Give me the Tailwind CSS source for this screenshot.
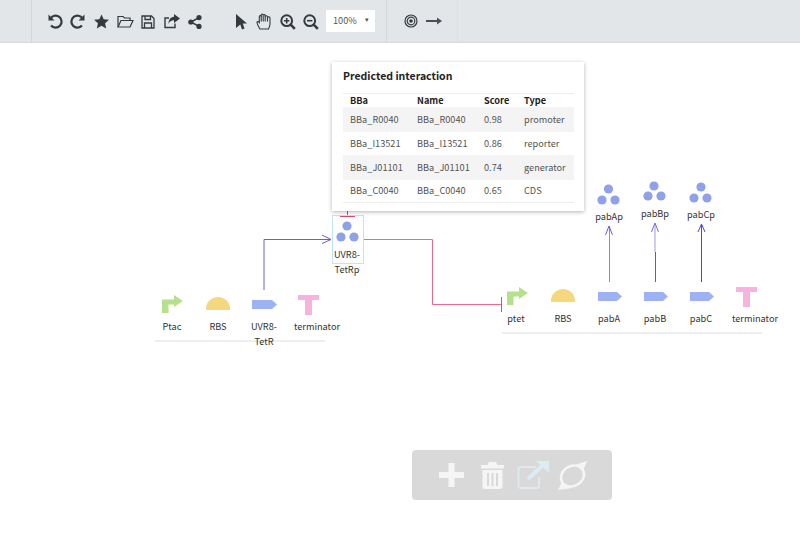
<!DOCTYPE html>
<html>
<head>
<meta charset="utf-8">
<script src="https://cdn.jsdelivr.net/npm/@tailwindcss/browser@4"></script>
</head>
<body class="bg-white overflow-hidden font-['Noto_Sans_CJK_SC','Noto_Sans',sans-serif] text-[#333]">
<div class="w-[800px] h-[552px] relative overflow-hidden">
  <!-- toolbar -->
  <div class="h-[43px] bg-[#e2e6e9] border-b border-[#d5dadd] flex items-center text-[#343a40]">
    <div class="w-[32px] h-full border-r border-[#d3d8db] shrink-0"></div>
    <div class="flex items-center w-[355px] h-full border-r border-[#d3d8db] shrink-0 relative">
      <svg class="absolute left-[15px] top-[13px]" width="16" height="16" viewBox="0 0 16 16" fill="none" stroke="#343a40" stroke-width="2.2"><path d="M3.5 5.5 A6 6 0 1 1 4 12.5"/><path d="M1.5 1.5 L1.5 7.5 L7.5 7.5 Z" fill="#343a40" stroke="none"/></svg>
      <svg class="absolute left-[38px] top-[13px]" width="16" height="16" viewBox="0 0 16 16" fill="none" stroke="#343a40" stroke-width="2.2"><path d="M12.5 5.5 A6 6 0 1 0 12 12.5"/><path d="M14.5 1.5 L14.5 7.5 L8.5 7.5 Z" fill="#343a40" stroke="none"/></svg>
      <svg class="absolute left-[62px] top-[14px]" width="15" height="15" viewBox="0 0 16 15"><path fill="#343a40" d="M8 0 L10.3 5 L16 5.6 L11.8 9.4 L13 15 L8 12.1 L3 15 L4.2 9.4 L0 5.6 L5.7 5 Z"/></svg>
      <svg class="absolute left-[85px] top-[15px]" width="17" height="13" viewBox="0 0 17 13" fill="none" stroke="#343a40" stroke-width="1.2"><path d="M1 11.5 V1.5 H6 L7.5 3 H13 V5"/><path d="M1 12 L4 5.5 H16 L13 12 Z"/></svg>
      <svg class="absolute left-[109px] top-[15px]" width="14" height="14" viewBox="0 0 14 14" fill="none" stroke="#343a40" stroke-width="1.3"><path d="M1 1 H10.5 L13 3.5 V13 H1 Z"/><path d="M4 1 V4.5 H9.5 V1"/><path d="M3.5 13 V8 H10.5 V13"/></svg>
      <svg class="absolute left-[132px] top-[14px]" width="16" height="15" viewBox="0 0 16 15"><path fill="none" stroke="#343a40" stroke-width="1.4" d="M11 9.5 V13.5 H1 V4 H5"/><path fill="#343a40" d="M10 0 L16 4.5 L10 9 V6.3 C7 6.3 5.5 7.5 4.5 10 C4.5 6 6.5 3 10 2.8 Z"/></svg>
      <svg class="absolute left-[156px] top-[15px]" width="14" height="14" viewBox="0 0 14 14"><g fill="#343a40"><circle cx="2.8" cy="7" r="2.6"/><circle cx="11" cy="2.6" r="2.6"/><circle cx="11" cy="11.4" r="2.6"/></g><path d="M3 7 L11 2.6 M3 7 L11 11.4" stroke="#343a40" stroke-width="1.6"/></svg>
      <svg class="absolute left-[204px] top-[14px]" width="11" height="16" viewBox="0 0 11 16"><path fill="#343a40" d="M0 0 L11 9.5 H6.8 L8.5 14.5 L6 15.5 L4.3 10.5 L0 14 Z"/></svg>
      <svg class="absolute left-[224px] top-[13px]" width="16" height="17" viewBox="0 0 16 17" fill="none" stroke="#343a40" stroke-width="1.1"><path d="M4 16 C2.5 13 1 11.5 1 9.5 C1 8.3 2.5 8.3 3.3 9.5 V3.5 C3.3 2.2 5.2 2.2 5.2 3.5 V2 C5.2 .7 7.2 .7 7.2 2 V2.5 C7.2 1.3 9.2 1.3 9.2 2.5 V3.5 C9.2 2.5 11.5 2.5 11.5 3.7 V4.5 C11.5 3.6 14 3.6 14 5 V11 C14 13 13 14.5 12.5 16 Z"/><path d="M5.2 3 V8.5 M7.2 2.5 V8.5 M9.2 3 V8.5 M11.5 4 V8.5"/></svg>
      <svg class="absolute left-[248px] top-[14px]" width="16" height="16" viewBox="0 0 16 16" fill="none" stroke="#343a40"><circle cx="6.7" cy="6.7" r="5.4" stroke-width="2"/><path d="M10.7 10.7 L14.8 14.8" stroke-width="2.6"/><path d="M4 6.7 H9.4 M6.7 4 V9.4" stroke-width="1.6"/></svg>
      <svg class="absolute left-[271px] top-[14px]" width="16" height="16" viewBox="0 0 16 16" fill="none" stroke="#343a40"><circle cx="6.7" cy="6.7" r="5.4" stroke-width="2"/><path d="M10.7 10.7 L14.8 14.8" stroke-width="2.6"/><path d="M4 6.7 H9.4" stroke-width="1.6"/></svg>
      <div class="absolute left-[294px] top-[10px] w-[49px] h-[22px] bg-white flex items-center text-[9.2px] pl-[7px] text-[#555]">100%<span class="absolute right-[6px] top-[5px] text-[7px] leading-[8px]">▾</span></div>
    </div>
    <div class="w-[71px] h-full border-r border-[#dce0e3] shrink-0 relative">
      <svg class="absolute left-[17px] top-[14px]" width="14" height="14" viewBox="0 0 14 14" fill="none" stroke="#343a40"><circle cx="7" cy="7" r="6" stroke-width="1.2"/><circle cx="7" cy="7" r="3.8" stroke-width="1.2"/><circle cx="7" cy="7" r="1.8" fill="#343a40" stroke="none"/></svg>
      <svg class="absolute left-[39px] top-[16px]" width="16" height="10" viewBox="0 0 16 10"><path d="M0 5 H12" stroke="#4a5055" stroke-width="2"/><path d="M11 1.5 L16 5 L11 8.5 Z" fill="#4a5055"/></svg>
    </div>
  </div>

  <!-- connectors -->
  <svg class="absolute left-0 top-0" width="800" height="552" fill="none">
    <path d="M264 290 V239.5 H331" stroke="#6d5be6"/>
    <path d="M322 235 L331 239.5 L322 243.5" stroke="#6d5be6"/>
    <path d="M363 239.5 H432.5 V304.5 H501" stroke="#ec6a86"/>
    <path d="M501.5 297 V312" stroke="#c85a70"/>
    <path d="M347.5 211 V216" stroke="#d84a68"/>
    <path d="M340 216.5 H355" stroke="#d84a68"/>
    <path d="M609.5 282 V226" stroke="#9080ea"/>
    <path d="M605.5 235 L609 226 L612.5 235" stroke="#6d5be6"/>
    <path d="M655.5 282 V252" stroke="#6a4fe0"/>
    <path d="M655 252 V224" stroke="#a698ea"/>
    <path d="M651.5 232 L655 223 L658.5 232" stroke="#7a66dd"/>
    <path d="M701.5 282 V225" stroke="#5a3de0"/>
    <path d="M698 232 L701.5 224 L705 232" stroke="#5a3de0"/>
  </svg>

  <!-- baselines -->
  <div class="absolute left-[155px] top-[340px] w-[170px] h-[2px] bg-[#eceeef]"></div>
  <div class="absolute left-[502px] top-[332px] w-[260px] h-[2px] bg-[#eceeef]"></div>

  <!-- Protein selected box -->
  <div class="absolute left-[332px] top-[215px] w-[32px] h-[49px] border border-[#c5e3f8]"></div>

  <!-- parts left -->
  <svg class="absolute left-[162px] top-[295px]" width="22" height="18" viewBox="0 0 22 18"><path fill="#b5e08c" d="M0 18 V4.5 H12 V0 L21 6 L12 12 V9.5 H6.5 V18 Z"/></svg>
  <div class="absolute left-[206px] top-[297px] w-[24px] h-[13px] bg-[#f5d77e] rounded-t-[12px]"></div>
  <svg class="absolute left-[252px] top-[299px]" width="26" height="11" viewBox="0 0 26 11"><path fill="#9db2f5" d="M0 1 H20 L25 5.5 L20 10 H0 Z"/></svg>
  <svg class="absolute left-[298px] top-[295px]" width="22" height="20" viewBox="0 0 22 20"><path fill="#f6b3de" d="M0 0 H21 V5 H14 V20 H7 V5 H0 Z"/></svg>

  <!-- parts right -->
  <svg class="absolute left-[507px] top-[287px]" width="22" height="18" viewBox="0 0 22 18"><path fill="#b5e08c" d="M0 18 V4.5 H12 V0 L21 6 L12 12 V9.5 H6.5 V18 Z"/></svg>
  <div class="absolute left-[551px] top-[289px] w-[24px] h-[13px] bg-[#f5d77e] rounded-t-[12px]"></div>
  <svg class="absolute left-[598px] top-[291px]" width="25" height="11" viewBox="0 0 25 11"><path fill="#9db2f5" d="M0 1 H19 L24 5.5 L19 10 H0 Z"/></svg>
  <svg class="absolute left-[644px] top-[291px]" width="25" height="11" viewBox="0 0 25 11"><path fill="#9db2f5" d="M0 1 H19 L24 5.5 L19 10 H0 Z"/></svg>
  <svg class="absolute left-[690px] top-[291px]" width="25" height="11" viewBox="0 0 25 11"><path fill="#9db2f5" d="M0 1 H19 L24 5.5 L19 10 H0 Z"/></svg>
  <svg class="absolute left-[736px] top-[287px]" width="22" height="20" viewBox="0 0 22 20"><path fill="#f6b3de" d="M0 0 H21 V5 H14 V20 H7 V5 H0 Z"/></svg>

  <!-- protein glyphs -->
  <svg class="absolute left-[336px] top-[220px]" width="24" height="23" viewBox="0 0 24 23"><g fill="#8fa1e8"><circle cx="11" cy="6" r="4.6"/><circle cx="5" cy="17" r="4.6"/><circle cx="18" cy="17" r="4.6"/></g></svg>
  <svg class="absolute left-[597px] top-[183px]" width="26" height="23" viewBox="0 0 26 23"><g fill="#8fa1e8"><circle cx="11.5" cy="6" r="4.6"/><circle cx="5" cy="17" r="4.6"/><circle cx="18" cy="17" r="4.6"/></g></svg>
  <svg class="absolute left-[642px] top-[180px]" width="26" height="23" viewBox="0 0 26 23"><g fill="#8fa1e8"><circle cx="12" cy="6" r="4.6"/><circle cx="6" cy="16" r="4.6"/><circle cx="19" cy="16" r="4.6"/></g></svg>
  <svg class="absolute left-[689px] top-[181px]" width="26" height="23" viewBox="0 0 26 23"><g fill="#8fa1e8"><circle cx="12" cy="6" r="4.6"/><circle cx="5" cy="17" r="4.6"/><circle cx="18" cy="17" r="4.6"/></g></svg>

  <!-- labels -->
  <div class="absolute text-[9.2px] leading-[15px] text-center w-[60px] left-[142px] top-[319px]">Ptac</div>
  <div class="absolute text-[9.2px] leading-[15px] text-center w-[60px] left-[188px] top-[319px]">RBS</div>
  <div class="absolute text-[9.2px] leading-[15px] text-center w-[40px] left-[244px] top-[319px]">UVR8-<br>TetR</div>
  <div class="absolute text-[9.2px] leading-[15px] text-center w-[70px] left-[282px] top-[319px]">terminator</div>
  <div class="absolute text-[9.2px] leading-[15px] text-center w-[40px] left-[327px] top-[247px]">UVR8-<br>TetRp</div>
  <div class="absolute text-[9.2px] leading-[15px] text-center w-[60px] left-[486px] top-[311px]">ptet</div>
  <div class="absolute text-[9.2px] leading-[15px] text-center w-[60px] left-[533px] top-[311px]">RBS</div>
  <div class="absolute text-[9.2px] leading-[15px] text-center w-[60px] left-[579px] top-[311px]">pabA</div>
  <div class="absolute text-[9.2px] leading-[15px] text-center w-[60px] left-[625px] top-[311px]">pabB</div>
  <div class="absolute text-[9.2px] leading-[15px] text-center w-[60px] left-[671px] top-[311px]">pabC</div>
  <div class="absolute text-[9.2px] leading-[15px] text-center w-[70px] left-[720px] top-[311px]">terminator</div>
  <div class="absolute text-[9.2px] leading-[15px] text-center w-[60px] left-[579px] top-[209px]">pabAp</div>
  <div class="absolute text-[9.2px] leading-[15px] text-center w-[60px] left-[625px] top-[206px]">pabBp</div>
  <div class="absolute text-[9.2px] leading-[15px] text-center w-[60px] left-[671px] top-[207px]">pabCp</div>

  <!-- popover -->
  <div class="absolute left-[332px] top-[62px] w-[252px] h-[149px] bg-white shadow-[0_1px_4px_rgba(0,0,0,0.3)] px-[11px] pt-[6px]">
    <div class="text-[10.5px] leading-[15px] font-bold text-[#222] h-[25px]">Predicted interaction</div>
    <table class="w-[231px] table-fixed text-[9.2px] text-[#555] border-t border-[#eeeeee] border-b">
      <thead>
        <tr class="h-[13px] text-[#222] text-left leading-[13px]">
          <th class="w-[74px] pl-[7px] font-bold">BBa</th><th class="w-[67px] font-bold">Name</th><th class="w-[40px] font-bold">Score</th><th class="font-bold">Type</th>
        </tr>
      </thead>
      <tbody>
        <tr class="h-[25px] bg-[#f4f4f4]"><td class="pl-[7px]">BBa_R0040</td><td>BBa_R0040</td><td>0.98</td><td>promoter</td></tr>
        <tr class="h-[23px]"><td class="pl-[7px]">BBa_I13521</td><td>BBa_I13521</td><td>0.86</td><td>reporter</td></tr>
        <tr class="h-[25px] bg-[#f4f4f4]"><td class="pl-[7px]">BBa_J01101</td><td>BBa_J01101</td><td>0.74</td><td>generator</td></tr>
        <tr class="h-[22px]"><td class="pl-[7px]">BBa_C0040</td><td>BBa_C0040</td><td>0.65</td><td>CDS</td></tr>
      </tbody>
    </table>
  </div>

  <!-- bottom action bar -->
  <div class="absolute left-[412px] top-[450px] w-[200px] h-[50px] rounded-[4px] bg-[#d9d9d9] flex items-center">
    <svg class="absolute left-[27px] top-[13px]" width="25" height="24" viewBox="0 0 25 24"><path fill="#f5f5f5" d="M9.5 0 H15.5 V9 H25 V15 H15.5 V24 H9.5 V15 H0 V9 H9.5 Z"/></svg>
    <svg class="absolute left-[69px] top-[12px]" width="23" height="27" viewBox="0 0 23 27"><path fill="#f5f5f5" d="M8 0 H15 L16.5 3 H23 V6.5 H0 V3 H6.5 Z"/><path fill="#f5f5f5" fill-rule="evenodd" d="M1.5 8 H21.5 V25 Q21.5 27 19.5 27 H3.5 Q1.5 27 1.5 25 Z M6 11 V24 H8 V11 Z M10.5 11 V24 H12.5 V11 Z M15 11 V24 H17 V11 Z"/></svg>
    <svg class="absolute left-[105px] top-[10px]" width="32" height="30" viewBox="0 0 32 30" fill="none"><path d="M19 7 H3.5 Q1.5 7 1.5 9 V26 Q1.5 28 3.5 28 H20 Q22 28 22 26 V17" stroke="#dfe8ec" stroke-width="2"/><path d="M11 19 L26 5" stroke="#dcebf4" stroke-width="4"/><path fill="#dcebf4" d="M19 1 H32 V13 Z"/></svg>
    <svg class="absolute left-[146px] top-[10px]" width="30" height="31" viewBox="0 0 30 31" fill="none"><ellipse cx="14.5" cy="16" rx="12" ry="10" transform="rotate(-30 14.5 16)" stroke="#f5f5f5" stroke-width="2.5"/><path d="M17 5 L29 1 L25 11 Z" fill="#f5f5f5"/><path d="M0 30 L4 22 L14 28 Z" fill="#f5f5f5"/></svg>
  </div>
</div>
</body>
</html>
